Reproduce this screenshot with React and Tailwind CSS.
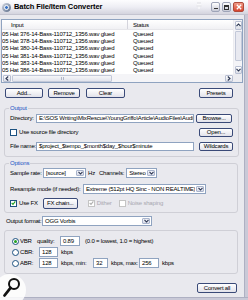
import React from "react";

function Btn({ children, className = "" }) {
  return (
    <div
      className={`shrink-0 flex items-center justify-center rounded-[2px] border border-[#3a4a78] bg-linear-to-b from-white to-[#e2e2ea] text-[6px] leading-none text-black whitespace-nowrap ${className}`}
    >
      {children}
    </div>
  );
}

function Input({ children, className = "" }) {
  return (
    <div
      className={`shrink-0 flex items-center border border-[#8fa3c0] bg-white pl-[2px] text-[6px] leading-none whitespace-nowrap overflow-hidden ${className}`}
    >
      {children}
    </div>
  );
}

function Chevron() {
  return (
    <svg width="5" height="4" viewBox="0 0 5 4">
      <path d="M0.5 0.8 L2.5 3 L4.5 0.8" fill="none" stroke="#2a3550" strokeWidth="1.1" />
    </svg>
  );
}

function Select({ children, className = "" }) {
  return (
    <div
      className={`shrink-0 flex items-stretch border border-[#8fa3c0] bg-white text-[6px] leading-none whitespace-nowrap overflow-hidden ${className}`}
    >
      <div className="flex-1 flex items-center pl-[2px] overflow-hidden">{children}</div>
      <div className="w-[8px] shrink-0 m-[1px] flex items-center justify-center rounded-[1px] border border-[#a9b4cc] bg-linear-to-b from-[#f4f5fa] to-[#d6d9e6]">
        <Chevron />
      </div>
    </div>
  );
}

function Check({ checked, disabled }) {
  return (
    <div
      className={`shrink-0 w-[7px] h-[7px] flex items-center justify-center border ${
        disabled ? "border-[#c4c4c4]" : "border-[#1c5180]"
      } bg-white`}
    >
      {checked && (
        <svg width="6" height="6" viewBox="0 0 6 6">
          <path
            d="M0.8 3 L2.4 4.6 L5.2 1"
            fill="none"
            stroke={disabled ? "#b0b0b0" : "#21a121"}
            strokeWidth="1.3"
          />
        </svg>
      )}
    </div>
  );
}

function Radio({ on }) {
  return (
    <div className="shrink-0 w-[7px] h-[7px] rounded-full border border-[#1c5180] bg-white flex items-center justify-center">
      {on && <div className="w-[3px] h-[3px] rounded-full bg-[#21a121]" />}
    </div>
  );
}

const rows = ["376", "378", "380", "381", "383", "386"];

export default function App() {
  return (
    <div className="relative w-[248px] h-[300px] overflow-hidden bg-[#e9e9ee] font-['Liberation_Sans',Arial,sans-serif] text-[6px] leading-none tracking-[-0.2px] text-black flex flex-col whitespace-nowrap">
      {/* Title bar */}
      <div className="h-[15px] shrink-0 flex items-center bg-linear-to-b from-[#fdfdfe] via-[#eeeef4] to-[#d4d4de] border-b border-[#c4c4d0]">
        <div className="ml-[2px] w-[9px] h-[9px] rounded-full bg-linear-to-br from-[#d8dde6] to-[#5a6a86] flex items-center justify-center">
          <div className="w-[5px] h-[5px] rounded-full bg-[#3b73c4] border border-white" />
        </div>
        <div className="ml-[3px] text-[7.5px] font-bold tracking-[-0.1px]">Batch File/Item Converter</div>
        <div className="flex-1" />
        <svg width="6" height="7" viewBox="0 0 6 7" className="mr-[9px] -mt-[4px]">
          <path d="M1 1 H5 M2 1 V4 M4 1 V4 M0.5 4 H5.5 M3 4 V7" stroke="#ffffff" strokeWidth="1" fill="none" />
          <path d="M1 1 H5 M0.5 4 H5.5" stroke="#b8b8c4" strokeWidth="0.5" fill="none" />
        </svg>
        <div className="w-[9px] h-[10px] rounded-[2px] border border-[#9ea4b8] bg-linear-to-b from-white to-[#c8cad6] flex items-end justify-center pb-[2px]">
          <div className="w-[4px] h-[1px] bg-[#333]" />
        </div>
        <div className="ml-[2px] w-[9px] h-[10px] rounded-[2px] border border-[#9ea4b8] bg-linear-to-b from-white to-[#c8cad6] flex items-center justify-center">
          <div className="w-[5px] h-[5px] border border-[#333] border-t-2" />
        </div>
        <div className="ml-[2px] mr-[4px] w-[11px] h-[10px] rounded-[2px] border border-[#b04a3a] bg-linear-to-b from-[#f09a88] to-[#d6422c] flex items-center justify-center">
          <svg width="6" height="6" viewBox="0 0 6 6">
            <path d="M0.8 0.8 L5.2 5.2 M5.2 0.8 L0.8 5.2" stroke="white" strokeWidth="1.3" />
          </svg>
        </div>
      </div>

      <div className="flex-1 flex">
        <div className="flex-1 flex flex-col">
          {/* List */}
          <div className="mt-[4px] ml-[1px] w-[242px] h-[64px] border border-[#8fa3c0] bg-white flex flex-col">
            <div className="flex flex-1">
              <div className="flex-1 flex flex-col overflow-hidden">
                <div className="h-[10px] flex items-center border-b border-[#e6e6ea] bg-linear-to-b from-white to-[#f1f1f4]">
                  <div className="w-[126px] shrink-0 pl-[9px] border-r border-[#d4d4dc] h-full flex items-center">Input</div>
                  <div className="pl-[5px]">Status</div>
                </div>
                {rows.map((r) => (
                  <div key={r} className="h-[7.33px] flex items-center">
                    <div className="w-[131px] shrink-0">05 Hat {r}-14-Bass-110712_1356.wav glued</div>
                    <div>Queued</div>
                  </div>
                ))}
              </div>
              <div className="w-[9px] shrink-0 flex flex-col bg-[#f4f4f7] border-l border-[#ececf0]">
                <div className="h-[9px] m-[0.5px] flex items-center justify-center rounded-[1px] border border-[#b8bfd2] bg-linear-to-b from-white to-[#dcdfe8]">
                  <svg width="5" height="4" viewBox="0 0 5 4">
                    <path d="M0.5 3.2 L2.5 1 L4.5 3.2" fill="none" stroke="#2a3550" strokeWidth="1.1" />
                  </svg>
                </div>
                <div className="h-[30px] mx-[0.5px] mt-[1px] rounded-[1px] border border-[#c2c8d8] bg-[#e8e9f0]" />
                <div className="flex-1" />
                <div className="h-[8px] m-[0.5px] flex items-center justify-center rounded-[1px] border border-[#b8bfd2] bg-linear-to-b from-white to-[#dcdfe8]">
                  <Chevron />
                </div>
              </div>
            </div>
            <div className="h-[8px] shrink-0 flex bg-[#f4f4f7]">
              <div className="w-[8px] m-[0.5px] flex items-center justify-center rounded-[1px] border border-[#b8bfd2] bg-linear-to-b from-white to-[#dcdfe8]">
                <svg width="4" height="5" viewBox="0 0 4 5">
                  <path d="M3.2 0.5 L1 2.5 L3.2 4.5" fill="none" stroke="#2a3550" strokeWidth="1.1" />
                </svg>
              </div>
              <div className="w-[100px] my-[0.5px] ml-[1px] rounded-[1px] border border-[#c2c8d8] bg-linear-to-b from-[#f6f6f9] to-[#e2e4ec] flex items-center justify-center">
                <div className="w-[3px] h-[3px] border-x border-[#b0b6c8]" />
              </div>
              <div className="flex-1" />
              <div className="w-[8px] m-[0.5px] flex items-center justify-center rounded-[1px] border border-[#b8bfd2] bg-linear-to-b from-white to-[#dcdfe8]">
                <svg width="4" height="5" viewBox="0 0 4 5">
                  <path d="M0.8 0.5 L3 2.5 L0.8 4.5" fill="none" stroke="#2a3550" strokeWidth="1.1" />
                </svg>
              </div>
              <div className="w-[9px] bg-[#ececf0]" />
            </div>
          </div>

          {/* Buttons row */}
          <div className="mt-[5px] h-[10px] flex">
            <Btn className="ml-[5px] w-[38px]">Add...</Btn>
            <Btn className="ml-[5px] w-[32px]">Remove</Btn>
            <Btn className="ml-[6px] w-[39px]">Clear</Btn>
            <div className="flex-1" />
            <Btn className="mr-[11px] w-[34px]">Presets</Btn>
          </div>

          {/* Output group */}
          <fieldset className="mt-[6px] ml-[4px] mr-[5px] border border-[#cfcfd6] rounded-[3px] px-[5px] pb-[5px]">
            <legend className="h-[8px] leading-[8px] px-[1px] -ml-[1px] text-[#2452c4]">Output</legend>
            <div className="mt-[1px] h-[10px] flex items-center">
              <div className="w-[26px] shrink-0">Directory:</div>
              <Input className="w-[158px] h-[9px]">E:\SOS Writing\MixRescue\YoungGriffo\Article\AudioFiles\Audi</Input>
              <Btn className="ml-[2px] w-[36px] h-[9px]">Browse...</Btn>
            </div>
            <div className="mt-[4px] h-[10px] flex items-center">
              <Check />
              <div className="ml-[2px]">Use source file directory</div>
              <div className="flex-1" />
              <Btn className="w-[34px] h-[9px]">Open...</Btn>
            </div>
            <div className="mt-[4px] h-[10px] flex items-center">
              <div className="w-[26px] shrink-0">File name:</div>
              <Input className="w-[158px] h-[9px]">$project_$tempo_$month$day_$hour$minute</Input>
              <div className="flex-1" />
              <Btn className="w-[34px] h-[9px]">Wildcards</Btn>
            </div>
          </fieldset>

          {/* Options group */}
          <fieldset className="mt-[2px] ml-[4px] mr-[6px] border border-[#cfcfd6] rounded-[3px] px-[5px] pb-[4px]">
            <legend className="h-[8px] leading-[8px] px-[1px] -ml-[1px] text-[#2452c4]">Options</legend>
            <div className="mt-[1px] h-[10px] flex items-center">
              <div className="w-[33px] shrink-0">Sample rate:</div>
              <Select className="w-[43px] h-[10px]">[source]</Select>
              <div className="ml-[2px]">Hz</div>
              <div className="ml-[4px]">Channels:</div>
              <Select className="ml-[2px] w-[31px] h-[10px]">Stereo</Select>
            </div>
            <div className="mt-[6px] h-[10px] flex items-center">
              <div className="w-[73px] shrink-0">Resample mode (if needed):</div>
              <Select className="w-[123px] h-[10px]">Extreme (512pt HQ Sinc - NON REALTIME)</Select>
            </div>
            <div className="mt-[4px] h-[10px] flex items-center">
              <Check checked />
              <div className="ml-[2px]">Use FX</div>
              <Btn className="ml-[5px] w-[35px] h-[11px]">FX chain...</Btn>
              <div className="ml-[10px]"><Check checked disabled /></div>
              <div className="ml-[2px] text-[#a8a8b0]">Dither</div>
              <div className="ml-[7px]"><Check disabled /></div>
              <div className="ml-[2px] text-[#a8a8b0]">Noise shaping</div>
            </div>
          </fieldset>

          {/* Output format */}
          <div className="mt-[3px] h-[10px] flex items-center pl-[6px]">
            <div className="w-[36px] shrink-0">Output format:</div>
            <Select className="w-[110px] h-[10px]">OGG Vorbis</Select>
          </div>

          {/* VBR box */}
          <div className="mt-[4px] ml-[4px] mr-[6px] border border-[#cfcfd6] rounded-[3px] pl-[7px] pb-[5px]">
            <div className="mt-[5px] h-[10px] flex items-center">
              <Radio on />
              <div className="ml-[1px] w-[17px] shrink-0">VBR</div>
              <div className="w-[23px] shrink-0">quality:</div>
              <Input className="w-[20px] h-[10px]">0.89</Input>
              <div className="ml-[5px]">(0.0 = lowest, 1.0 = highest)</div>
            </div>
            <div className="mt-[1px] h-[10px] flex items-center">
              <Radio />
              <div className="ml-[1px] w-[19px] shrink-0">CBR:</div>
              <Input className="w-[19px] h-[10px]">128</Input>
              <div className="ml-[3px]">kbps</div>
            </div>
            <div className="mt-[1px] h-[10px] flex items-center">
              <Radio />
              <div className="ml-[1px] w-[19px] shrink-0">ABR:</div>
              <Input className="w-[19px] h-[10px]">128</Input>
              <div className="ml-[3px] w-[32px] shrink-0">kbps, min:</div>
              <Input className="w-[15px] h-[10px]">32</Input>
              <div className="ml-[3px] w-[28px] shrink-0">kbps, max:</div>
              <Input className="w-[20px] h-[10px]">256</Input>
              <div className="ml-[3px]">kbps</div>
            </div>
          </div>

          <div className="mt-[9px] flex justify-end">
            <Btn className="mr-[7px] w-[40px] h-[10px]">Convert all</Btn>
          </div>
        </div>
        <div className="w-[4px] shrink-0 bg-[#c9c9d7] border-l border-[#aeb0c2]" />
      </div>
      <div className="h-[3px] shrink-0 bg-[#c9c9d7] border-t border-[#aeb0c2]" />

      {/* magnifier overlay */}
      <div className="absolute left-[-6px] bottom-[-6px] w-[32px] h-[32px] rounded-full bg-white/85 flex items-center justify-center">
        <svg width="20" height="22" viewBox="0 0 20 22" className="ml-[4px] -mt-[4px]">
          <circle cx="12" cy="7" r="5" fill="none" stroke="#111" strokeWidth="2" />
          <path d="M8.5 10.8 L2.5 18.5" stroke="#111" strokeWidth="2.8" strokeLinecap="round" />
        </svg>
      </div>
    </div>
  );
}
